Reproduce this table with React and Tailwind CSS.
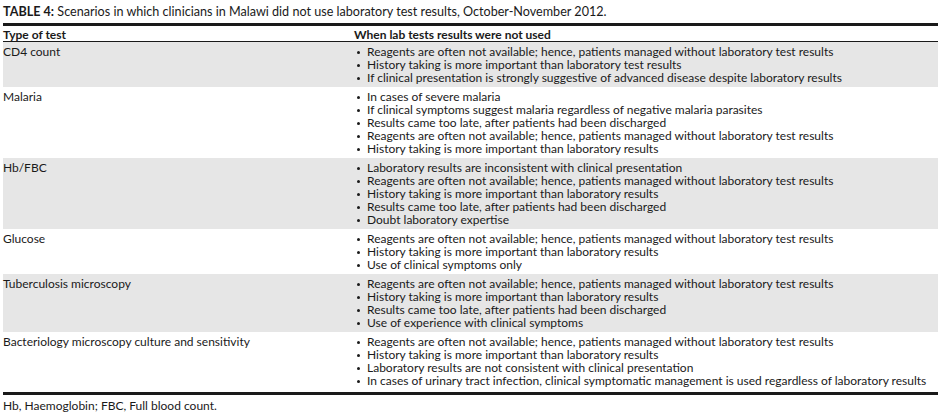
const rows = [
  {
    test: "CD4 count",
    gray: true,
    items: [
      "Reagents are often not available; hence, patients managed without laboratory test results",
      "History taking is more important than laboratory test results",
      "If clinical presentation is strongly suggestive of advanced disease despite laboratory results",
    ],
  },
  {
    test: "Malaria",
    gray: false,
    items: [
      "In cases of severe malaria",
      "If clinical symptoms suggest malaria regardless of negative malaria parasites",
      "Results came too late, after patients had been discharged",
      "Reagents are often not available; hence, patients managed without laboratory test results",
      "History taking is more important than laboratory results",
    ],
  },
  {
    test: "Hb/FBC",
    gray: true,
    items: [
      "Laboratory results are inconsistent with clinical presentation",
      "Reagents are often not available; hence, patients managed without laboratory test results",
      "History taking is more important than laboratory results",
      "Results came too late, after patients had been discharged",
      "Doubt laboratory expertise",
    ],
  },
  {
    test: "Glucose",
    gray: false,
    items: [
      "Reagents are often not available; hence, patients managed without laboratory test results",
      "History taking is more important than laboratory results",
      "Use of clinical symptoms only",
    ],
  },
  {
    test: "Tuberculosis microscopy",
    gray: true,
    items: [
      "Reagents are often not available; hence, patients managed without laboratory test results",
      "History taking is more important than laboratory results",
      "Results came too late, after patients had been discharged",
      "Use of experience with clinical symptoms",
    ],
  },
  {
    test: "Bacteriology microscopy culture and sensitivity",
    gray: false,
    items: [
      "Reagents are often not available; hence, patients managed without laboratory test results",
      "History taking is more important than laboratory results",
      "Laboratory results are not consistent with clinical presentation",
      "In cases of urinary tract infection, clinical symptomatic management is used regardless of laboratory results",
    ],
  },
];

export default function App() {
  return (
    <div className="w-[940px] h-[413px] bg-white text-[#1a1a1a] font-['Lato',sans-serif] overflow-hidden">
      <div className="ml-[3px] w-[935px]">
        <p className="pt-[5px] h-[23px] text-[12.6px] leading-[14px]">
          <span className="font-bold">TABLE 4:</span> Scenarios in which
          clinicians in Malawi did not use laboratory test results,
          October-November 2012.
        </p>
        <div className="border-t-[3px] border-[#1a1a1a]">
          <div className="grid grid-cols-[351px_1fr] h-[16px] border-b border-[#1a1a1a] text-[12px] leading-[13px] font-bold pt-[2px]">
            <div>Type of test</div>
            <div>When lab tests results were not used</div>
          </div>
          {rows.map((row, i) => (
            <div
              key={row.test}
              className={`grid grid-cols-[351px_1fr] pt-[3px] text-[12px] leading-[13px] ${
                row.gray ? "bg-[#e6e6e6]" : "bg-white"
              } ${i === rows.length - 1 ? "pb-[5px]" : "pb-[3px]"}`}
            >
              <div>{row.test}</div>
              <ul>
                {row.items.map((item) => (
                  <li key={item} className="flex">
                    <div className="w-[13px] shrink-0">
                      <div className="ml-[3px] mt-[6px] w-[3px] h-[3px] rounded-full bg-[#1a1a1a]" />
                    </div>
                    <span>{item}</span>
                  </li>
                ))}
              </ul>
            </div>
          ))}
        </div>
        <div className="border-t-[3px] border-[#1a1a1a] pt-[4px] text-[12px] leading-[13px]">
          Hb, Haemoglobin; FBC, Full blood count.
        </div>
      </div>
    </div>
  );
}
